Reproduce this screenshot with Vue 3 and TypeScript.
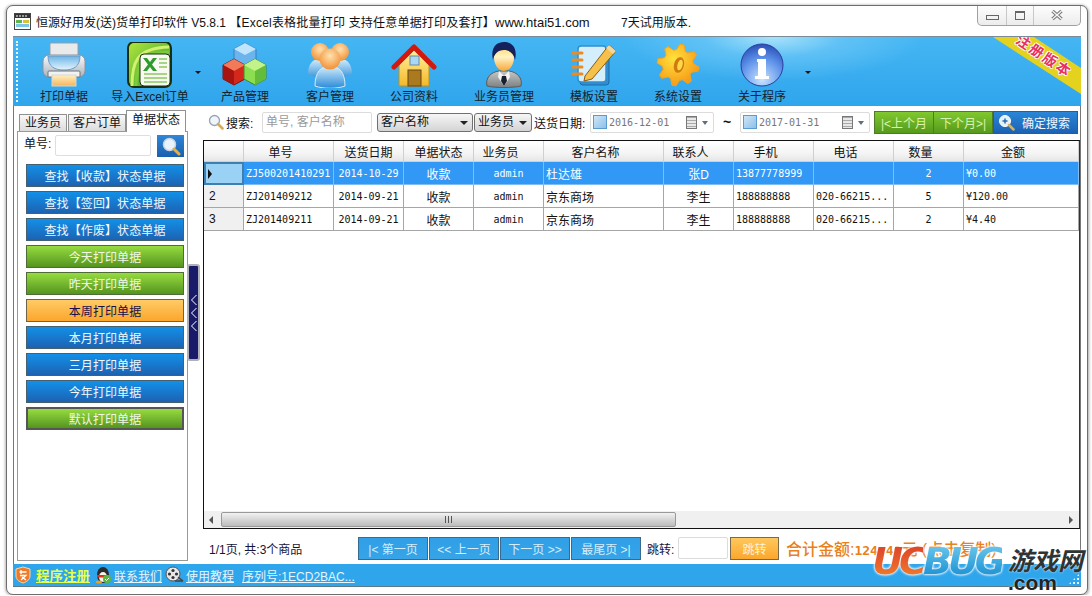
<script setup lang="ts">
// Toolbar entries; width keeps each label centred like the original toolbar
const tools = [
  { icon: "printer", label: "打印单据", width: 76 },
  { icon: "excel", label: "导入Excel订单", width: 96, more: true },
  { icon: "cubes", label: "产品管理", width: 94 },
  { icon: "people", label: "客户管理", width: 76 },
  { icon: "house", label: "公司资料", width: 92 },
  { icon: "agent", label: "业务员管理", width: 88 },
  { icon: "notebook", label: "模板设置", width: 92 },
  { icon: "gear", label: "系统设置", width: 76 },
  { icon: "info", label: "关于程序", width: 92, more: true },
];

const filters = [
  { label: "查找【收款】状态单据", tone: "blue" },
  { label: "查找【签回】状态单据", tone: "blue" },
  { label: "查找【作废】状态单据", tone: "blue" },
  { label: "今天打印单据", tone: "green" },
  { label: "昨天打印单据", tone: "green" },
  { label: "本周打印单据", tone: "orange" },
  { label: "本月打印单据", tone: "blue" },
  { label: "三月打印单据", tone: "blue" },
  { label: "今年打印单据", tone: "blue" },
  { label: "默认打印单据", tone: "green strong" },
];

const columns = ["", "单号", "送货日期", "单据状态", "业务员", "客户名称", "联系人", "手机", "电话", "数量", "金额"];
// These headers sit centred; the others lean left of their column
const centredHeads = [0, 2, 3];

const rows = [
  { no: "", id: "ZJ500201410291", date: "2014-10-29", state: "收款", user: "admin", customer: "杜达雄", contact: "张D", phone: "13877778999", tel: "", qty: "2", amount: "¥0.00" },
  { no: "2", id: "ZJ201409212", date: "2014-09-21", state: "收款", user: "admin", customer: "京东商场", contact: "李生", phone: "188888888", tel: "020-66215...", qty: "5", amount: "¥120.00" },
  { no: "3", id: "ZJ201409211", date: "2014-09-21", state: "收款", user: "admin", customer: "京东商场", contact: "李生", phone: "188888888", tel: "020-66215...", qty: "2", amount: "¥4.40" },
];

const pages = ["|< 第一页", "<< 上一页", "下一页 >>", "最尾页 >|"];

// Gear outline for the settings icon
const gearPoints = Array.from({ length: 32 }, (_, i) => {
  const tooth = i % 4 < 2 ? 21 : 15.5;
  const a = ((i + 0.5) / 32) * Math.PI * 2;
  return `${(23 + tooth * Math.cos(a)).toFixed(1)},${(23 + tooth * Math.sin(a)).toFixed(1)}`;
}).join(" ");
</script>

<template>
  <div class="window">
    <header class="titlebar">
      <svg class="app-icon" width="17" height="17" viewBox="0 0 17 17">
        <rect x="0.5" y="0.5" width="16" height="16" fill="#fff" stroke="#444" />
        <rect x="1" y="1" width="15" height="4" fill="#333" />
        <path d="M3 2v2M6 2v2M9 2v2M12 2v2" stroke="#fff" />
        <rect x="2" y="7" width="6" height="3" fill="#5fb548" />
        <rect x="9" y="7" width="6" height="3" fill="#d8c23a" />
        <rect x="2" y="11" width="13" height="3" fill="#7dc6e8" />
      </svg>
      <span class="title-text">恒源好用发(送)货单打印软件 V5.8.1 <span class="title-slogan">【Excel表格批量打印 支持任意单据打印及套打】</span><span class="title-url">www.htai51.com</span></span>
      <span class="trial">7天试用版本.</span>
      <div class="win-controls">
        <span class="ctl ctl-min"><i></i></span>
        <span class="ctl ctl-max"><i></i></span>
        <span class="ctl ctl-close">
          <svg width="14" height="12" viewBox="0 0 14 12">
            <path d="M2.500 2l9 8M11.500 2l-9 8" stroke="#777" stroke-width="3.400" fill="none" />
            <path d="M2.500 2l9 8M11.500 2l-9 8" stroke="#f4f4f4" stroke-width="1.400" fill="none" />
          </svg>
        </span>
      </div>
    </header>

    <nav class="toolbar">
      <div class="dots"></div>
      <div v-for="tool in tools" :key="tool.label" class="tool" :style="{ width: tool.width + 'px' }">
        <svg class="tool-icon" width="46" height="46" viewBox="0 0 46 46">
          <defs>
            <linearGradient id="gBody" x1="0" y1="0" x2="0" y2="1"><stop offset="0" stop-color="#fafbfc" /><stop offset="1" stop-color="#aab2bb" /></linearGradient>
            <linearGradient id="gBowl" x1="0" y1="0" x2="0" y2="1"><stop offset="0" stop-color="#6db4e8" /><stop offset="1" stop-color="#e6f5fd" /></linearGradient>
            <linearGradient id="gPaper" x1="0" y1="0" x2="0" y2="1"><stop offset="0" stop-color="#fff0c4" /><stop offset="1" stop-color="#f6b45a" /></linearGradient>
            <linearGradient id="gExcel" x1="0" y1="0" x2="1" y2="1"><stop offset="0" stop-color="#b4e63c" /><stop offset="1" stop-color="#1f9a2e" /></linearGradient>
            <linearGradient id="gWall" x1="0" y1="0" x2="0" y2="1"><stop offset="0" stop-color="#fff2a0" /><stop offset="1" stop-color="#f4b828" /></linearGradient>
            <linearGradient id="gShirt" x1="0" y1="0" x2="0" y2="1"><stop offset="0" stop-color="#d4eefc" /><stop offset="1" stop-color="#2a8ad8" /></linearGradient>
            <linearGradient id="gSuit" x1="0" y1="0" x2="0" y2="1"><stop offset="0" stop-color="#c4c8c8" /><stop offset="1" stop-color="#7c8082" /></linearGradient>
            <radialGradient id="gHead" cx="0.5" cy="0.35" r="0.7"><stop offset="0" stop-color="#ffe2b0" /><stop offset="1" stop-color="#f08a2c" /></radialGradient>
            <linearGradient id="gFace" x1="0" y1="0" x2="0" y2="1"><stop offset="0" stop-color="#ffd04a" /><stop offset="0.5" stop-color="#fff2c4" /><stop offset="1" stop-color="#f9a838" /></linearGradient>
            <radialGradient id="gGear" cx="0.4" cy="0.35" r="0.8"><stop offset="0" stop-color="#ffe23c" /><stop offset="1" stop-color="#f58a10" /></radialGradient>
            <radialGradient id="gInfo" cx="0.5" cy="0.85" r="0.95"><stop offset="0" stop-color="#c8e4ff" /><stop offset="0.55" stop-color="#5b8fe8" /><stop offset="1" stop-color="#1b3da8" /></radialGradient>
          </defs>

          <g v-if="tool.icon === 'printer'">
            <rect x="9" y="1" width="28" height="14" rx="1" fill="#e8eaec" stroke="#9a9ea4" />
            <rect x="2" y="13" width="42" height="22" rx="6" fill="url(#gBody)" stroke="#8a929c" />
            <path d="M7 14h32c0 11-7 14-16 14S7 25 7 14z" fill="url(#gBowl)" stroke="#6c9cc4" />
            <rect x="7" y="29" width="32" height="6" rx="1" fill="#f0f2f4" stroke="#6c747c" />
            <rect x="11" y="33" width="24" height="11" fill="url(#gPaper)" stroke="#d8d8cc" />
          </g>

          <g v-else-if="tool.icon === 'excel'">
            <rect x="1" y="0" width="43" height="45" rx="6" fill="url(#gExcel)" stroke="#18300f" stroke-width="2" />
            <path d="M5 44C5 22 8 6 42 5" fill="none" stroke="#d4f070" stroke-width="3" />
            <path d="M9 44C9 26 12 12 42 10" fill="none" stroke="#7ecb3a" stroke-width="3" />
            <rect x="13" y="12" width="30" height="32" rx="4" fill="#f8faf2" stroke="#18300f" />
            <path d="M16 16h4l3 4 3-4h4l-5 6.500 5 6.500h-4l-3-4-3 4h-4l5-6.500z" fill="#2f9a2f" />
            <path d="M32 17h8M32 21h8M32 25h8M17 32h23M17 36h23M17 40h23" stroke="#a8d48a" stroke-width="2" />
          </g>

          <g v-else-if="tool.icon === 'cubes'">
            <path d="M23 1l11 6v13l-11 6-11-6V7z" fill="#6cb4ee" stroke="#3a7fc0" />
            <path d="M23 1l11 6-11 6-11-6z" fill="#c0e4fb" />
            <path d="M12 17l11 6v14l-11 6-11-6V23z" fill="#d5281c" stroke="#7a1410" />
            <path d="M12 17l11 6-11 6-11-6z" fill="#f27a58" />
            <path d="M1 23l11 6v14l-11-6z" fill="#a8140f" />
            <path d="M33 17l11 6v14l-11 6-11-6V23z" fill="#8ade50" stroke="#3f8a28" />
            <path d="M33 17l11 6-11 6-11-6z" fill="#c4f28a" />
            <path d="M44 23l-11 6v14l11-6z" fill="#63bd3a" />
          </g>

          <g v-else-if="tool.icon === 'people'">
            <path d="M1 32c0-10 5-15 11-15s10 5 10 13l-6 8z" fill="url(#gShirt)" />
            <path d="M45 32c0-10-5-15-11-15s-10 5-10 13l6 8z" fill="url(#gShirt)" />
            <circle cx="13" cy="10" r="9" fill="url(#gHead)" />
            <circle cx="33" cy="10" r="9" fill="url(#gHead)" />
            <path d="M8 44c0-14 6-20 15-20s15 6 15 20c-8 3-22 3-30 0z" fill="url(#gShirt)" stroke="#d4ecfa" />
            <circle cx="23" cy="17" r="10.500" fill="url(#gHead)" />
          </g>

          <g v-else-if="tool.icon === 'house'">
            <path d="M8 23L23 8l15 15v21H8z" fill="url(#gWall)" stroke="#c0901c" />
            <path d="M3 25L23 5l20 20" fill="none" stroke="#d3190f" stroke-width="5" stroke-linejoin="round" stroke-linecap="round" />
            <rect x="19" y="14" width="9" height="9" fill="#a8d8f4" stroke="#6a8aa4" />
            <rect x="17" y="28" width="13" height="16" fill="#ab7a1e" stroke="#6a4410" />
          </g>

          <g v-else-if="tool.icon === 'agent'">
            <path d="M6 44c-2-8 4-14 12-15h10c8 1 14 7 12 15-8 2-26 2-34 0z" fill="url(#gSuit)" stroke="#5a5c58" />
            <path d="M18 29l5 5 5-5 1 6-6 9-6-9z" fill="#f4f4f0" />
            <path d="M21 34h4l1 5-3 5-3-5z" fill="#1b2030" />
            <ellipse cx="23" cy="15" rx="10" ry="14" fill="url(#gFace)" />
            <path d="M12 18C9 5 16 0 23 0s14 5 11 18c-1-6-5-10-11-10s-10 4-11 10z" fill="#16205c" />
          </g>

          <g v-else-if="tool.icon === 'notebook'">
            <rect x="9" y="6" width="29" height="37" rx="3" fill="#2f8fd0" stroke="#1d6aa8" />
            <rect x="7" y="4" width="28" height="36" rx="3" fill="#d4eefb" stroke="#2f8fd0" stroke-width="1.500" />
            <path d="M2 11h9M2 18h9M2 25h9M2 32h9" stroke="#f08a1e" stroke-width="3" stroke-linecap="round" />
            <path d="M14 34L38 3l7 6-24 28-8 2z" fill="#f6c14a" stroke="#8a5a14" />
            <path d="M38 3l7 6-3 3-7-6z" fill="#f0d8a0" />
          </g>

          <g v-else-if="tool.icon === 'gear'">
            <polygon :points="gearPoints" fill="url(#gGear)" stroke="#f4a418" stroke-linejoin="round" />
            <ellipse cx="24" cy="23" rx="5" ry="8" fill="#d17a10" transform="rotate(15 24 23)" />
            <ellipse cx="25" cy="23" rx="2.500" ry="5.500" fill="#ffd84a" transform="rotate(15 25 23)" />
          </g>

          <g v-else>
            <circle cx="23" cy="23" r="21" fill="url(#gInfo)" stroke="#2a3f9c" />
            <circle cx="23" cy="10" r="4" fill="#fff" />
            <path d="M18 17h9v17h3v3H16v-3h3V20h-1z" fill="#fff" />
          </g>
        </svg>
        <span class="tool-label">{{ tool.label }}</span>
        <i v-if="tool.more" class="more"></i>
      </div>

      <div class="ribbon"></div>
      <span class="ribbon-text">注册版本</span>
    </nav>

    <main class="main">
      <aside class="side">
        <div class="tabs">
          <span class="tab">业务员</span>
          <span class="tab">客户订单</span>
          <span class="tab active">单据状态</span>
        </div>
        <div class="panel">
          <div class="lookup">
            <label>单号:</label>
            <input class="lookup-input" type="text" />
            <button class="lookup-btn">
              <svg width="20" height="20" viewBox="0 0 20 20">
                <circle cx="8.500" cy="8.500" r="6" fill="#e8f3fb" stroke="#c4d4e0" stroke-width="1.500" />
                <path d="M13 13l5 5" stroke="#e0b04a" stroke-width="3" stroke-linecap="round" />
              </svg>
            </button>
          </div>
          <div class="filters">
            <button v-for="f in filters" :key="f.label" class="filter" :class="f.tone">{{ f.label }}</button>
          </div>
        </div>
      </aside>

      <div class="handle-col">
        <div class="handle">
          <svg width="6" height="38" viewBox="0 0 6 38">
            <path d="M5.500 1L.5 6l5 5M5.500 14L.5 19l5 5M5.500 27L.5 32l5 5" stroke="#fff" fill="none" />
          </svg>
        </div>
      </div>

      <section class="content">
        <div class="searchbar">
          <svg class="search-icon" width="16" height="16" viewBox="0 0 16 16">
            <circle cx="6.500" cy="6.500" r="5" fill="#eef6fc" stroke="#9aa4ae" stroke-width="1.300" />
            <path d="M10 10l4.500 4.500" stroke="#d9a94a" stroke-width="2.500" stroke-linecap="round" />
          </svg>
          <span class="search-label">搜索:</span>
          <input class="search-input" type="text" placeholder="单号, 客户名称" />
          <div class="select select-a">客户名称<i></i></div>
          <div class="select select-b">业务员<i></i></div>
          <span class="date-label">送货日期:</span>
          <div class="date">
            <b class="check"></b><span class="date-text">2016-12-01</span>
            <span class="cal"></span><i></i>
          </div>
          <span class="tilde">~</span>
          <div class="date">
            <b class="check"></b><span class="date-text">2017-01-31</span>
            <span class="cal"></span><i></i>
          </div>
          <div class="range">
            <button class="month">|&lt;上个月</button>
            <button class="month">下个月&gt;|</button>
            <button class="confirm">
              <svg width="17" height="17" viewBox="0 0 17 17">
                <circle cx="7" cy="7" r="5.500" fill="#e4f0f8" stroke="#fff" />
                <path d="M4.500 7h5M7 4.500v5" stroke="#2a6aa8" stroke-width="1.500" />
                <path d="M11 11l4.500 4.500" stroke="#e0b04a" stroke-width="2.500" stroke-linecap="round" />
              </svg>
              确定搜索
            </button>
          </div>
        </div>

        <div class="grid">
          <div class="row head">
            <span v-for="(c, i) in columns" :key="i" class="cell" :class="{ lean: !centredHeads.includes(i) }">{{ c }}</span>
          </div>
          <div v-for="(r, i) in rows" :key="r.id" class="row body" :class="{ selected: i === 0 }">
            <span class="cell indicator">
              <i v-if="i === 0" class="pointer"></i>{{ r.no }}
            </span>
            <span class="cell left mono">{{ r.id }}</span>
            <span class="cell mono">{{ r.date }}</span>
            <span class="cell">{{ r.state }}</span>
            <span class="cell mono">{{ r.user }}</span>
            <span class="cell left">{{ r.customer }}</span>
            <span class="cell">{{ r.contact }}</span>
            <span class="cell left mono">{{ r.phone }}</span>
            <span class="cell left mono">{{ r.tel }}</span>
            <span class="cell mono">{{ r.qty }}</span>
            <span class="cell left mono">{{ r.amount }}</span>
          </div>

          <div class="scrollbar">
            <i class="arrow-left"></i>
            <div class="thumb"><span class="grip"></span></div>
            <i class="arrow-right"></i>
          </div>
        </div>

        <div class="pager">
          <span class="pager-info">1/1页, 共:3个商品</span>
          <div class="pages">
            <button v-for="p in pages" :key="p" class="page-btn">{{ p }}</button>
          </div>
          <span class="jump-label">跳转:</span>
          <input class="jump-input" type="text" />
          <button class="jump-btn">跳转</button>
          <span class="total">合计金额:<span class="total-num">124.40</span>元 (点击复制)</span>
        </div>
      </section>
    </main>

    <footer class="statusbar">
      <svg width="16" height="18" viewBox="0 0 16 18">
        <path d="M1 3l7-2 7 2v7c0 4-4 6-7 7-3-1-7-3-7-7z" fill="#f07a28" stroke="#f8d8a8" />
        <path d="M4.500 6h7M6 4v4M5 9.500h6L6 14M7 11l4 3" stroke="#fff" stroke-width="1.300" fill="none" />
      </svg>
      <a class="link reg">程序注册</a>
      <svg width="18" height="18" viewBox="0 0 18 18">
        <ellipse cx="9" cy="9" rx="6" ry="8" fill="#2b2b2b" />
        <ellipse cx="9" cy="11" rx="4" ry="5" fill="#f8f4e8" />
        <path d="M3 9h12v2.500H3z" fill="#e03020" />
        <ellipse cx="5" cy="16" rx="3" ry="1.500" fill="#f0a020" />
        <circle cx="13" cy="13" r="4" fill="#5cb83a" />
        <path d="M11 13l1.500 1.500L15 12" stroke="#fff" fill="none" />
      </svg>
      <a class="link">联系我们</a>
      <svg width="19" height="18" viewBox="0 0 19 18">
        <circle cx="8" cy="8" r="7" fill="#e8e8e8" stroke="#555" />
        <circle cx="8" cy="4.500" r="1.600" fill="#333" /><circle cx="8" cy="11.500" r="1.600" fill="#333" />
        <circle cx="4.500" cy="8" r="1.600" fill="#333" /><circle cx="11.500" cy="8" r="1.600" fill="#333" />
        <path d="M10 15h8M13 11l5 4" stroke="#444" stroke-width="1.500" />
      </svg>
      <a class="link">使用教程</a>
      <a class="link serial">序列号:1ECD2BAC...</a>
      <i class="size-grip"></i>
    </footer>

    <!-- site stamp sitting over the lower right corner -->
    <div class="stamp">
      <span class="stamp-logo"><em class="uc">UC</em><em class="bug">BUG</em></span>
      <div class="stamp-side">
        <span class="stamp-cn">游戏网</span>
        <span class="stamp-com">.com</span>
      </div>
    </div>
  </div>
</template>

<style scoped>
.window {
  position: relative;
  box-sizing: border-box;
  width: 1082px;
  height: 590px;
  margin: 5px 0 0 6px;
  padding: 0 6px 7px;
  border: 1px solid #6e6e6e;
  border-radius: 7px;
  background: #fff;
  box-shadow: -1px 0 3px #bbb, 1px 1px 3px #aaa;
  display: flex;
  flex-direction: column;
  font: 12px "Liberation Sans", "Noto Sans CJK SC", sans-serif;
  color: #111;
  overflow: hidden;
}

button {
  font: inherit;
  padding: 0;
  cursor: default;
}

input {
  box-sizing: border-box;
  font: inherit;
  outline: none;
}

/* title bar */
.titlebar {
  height: 30px;
  display: flex;
  align-items: center;
  flex: none;
}
.app-icon {
  margin: 0 5px 0 1px;
}
.title-text {
  width: 555px;
  white-space: nowrap;
}
.title-slogan {
  letter-spacing: 0.2px;
}
.title-url {
  font-size: 13px;
}
.trial {
  margin-left: 30px;
}
.win-controls {
  margin-left: auto;
  margin-top: -11px;
  display: flex;
  height: 19px;
  border: 1px solid #a0a0a0;
  border-top: none;
  border-radius: 0 0 5px 5px;
  background: linear-gradient(#fdfdfd, #ececec);
}
.ctl {
  display: flex;
  align-items: center;
  justify-content: center;
  border-left: 1px solid #c8c8c8;
}
.ctl:first-child {
  border-left: none;
}
.ctl-min { width: 28px; }
.ctl-max { width: 26px; }
.ctl-close { width: 46px; }
.ctl-min i {
  width: 11px;
  height: 3px;
  margin-top: 5px;
  border: 1px solid #666;
}
.ctl-max i {
  width: 8px;
  height: 7px;
  border: 1px solid #666;
  box-shadow: inset 0 1px 0 #666;
}

/* toolbar */
.toolbar {
  position: relative;
  flex: none;
  height: 70px;
  box-sizing: border-box;
  padding-left: 13px;
  display: flex;
  align-items: flex-start;
  overflow: hidden;
  border-top: 1px solid #7a8a96;
  background:
    radial-gradient(ellipse 150px 44px at 760px 0, #a8e2fb 0%, rgba(120, 205, 248, 0.55) 45%, rgba(58, 170, 240, 0) 100%),
    linear-gradient(#45b6f3, #2fa5ec);
}
.dots {
  position: absolute;
  left: 3px;
  top: 4px;
  bottom: 4px;
  width: 2px;
  border-left: 2px dotted #e6f4fc;
}
.tool {
  position: relative;
  flex: none;
  display: flex;
  flex-direction: column;
  align-items: center;
}
.tool-icon {
  margin-top: 5px;
}
.tool-label {
  margin-top: 1px;
  white-space: nowrap;
  line-height: 16px;
  color: #14222c;
}
.more {
  position: absolute;
  right: -3px;
  top: 34px;
  border: 3px solid transparent;
  border-top: 3px solid #111;
  border-bottom: none;
}
.ribbon {
  position: absolute;
  right: 0;
  top: 0;
  width: 88px;
  height: 58px;
  background: #e4d21e;
  clip-path: polygon(0 0, 41px 0, 88px 31px, 88px 57px);
}
.ribbon-text {
  position: absolute;
  left: 1031px;
  top: 19px;
  transform: translate(-50%, -50%) rotate(34deg);
  font-size: 14px;
  line-height: 16px;
  font-weight: 700;
  letter-spacing: 2px;
  white-space: nowrap;
  color: #e8305e;
  text-shadow: 1px 0 0 #fff, -1px 0 0 #fff, 0 1px 0 #fff, 0 -1px 0 #fff;
}

/* main area */
.main {
  flex: 1;
  min-height: 0;
  display: flex;
  padding-left: 3px;
  border-left: 1px solid #777;
  border-right: 1px solid #777;
  box-sizing: border-box;
}
.side {
  flex: none;
  width: 171px;
  display: flex;
  flex-direction: column;
  padding: 4px 0 3px;
  box-sizing: border-box;
}
.tabs {
  display: flex;
  align-items: flex-end;
  height: 21px;
  padding-left: 2px;
  flex: none;
}
.tab {
  box-sizing: border-box;
  height: 17px;
  line-height: 16px;
  text-align: center;
  border: 1px solid #909090;
  border-bottom: none;
  background: linear-gradient(#f8f8f8, #dcdcdc);
  width: 48px;
}
.tab + .tab {
  width: 58px;
  margin-left: 1px;
}
.tab.active {
  position: relative;
  height: 22px;
  width: 60px;
  margin: 0 0 -1px 0;
  line-height: 18px;
  background: #fff;
  z-index: 1;
}
.panel {
  flex: 1;
  box-sizing: border-box;
  border: 1px solid #999;
  padding: 3px 3px 0 8px;
}
.lookup {
  display: flex;
  align-items: flex-start;
  margin-left: -2px;
}
.lookup label {
  width: 31px;
  line-height: 18px;
}
.lookup-input {
  width: 96px;
  height: 21px;
  border: 1px solid #dedede;
  border-radius: 2px;
}
.lookup-btn {
  width: 27px;
  height: 22px;
  margin-left: 6px;
  border: none;
  background: linear-gradient(#2f86d8, #1a5fae);
  display: flex;
  align-items: center;
  justify-content: center;
}
.filters {
  margin-top: 7px;
  display: flex;
  flex-direction: column;
  gap: 4px;
}
.filter {
  box-sizing: border-box;
  height: 23px;
  border: 1px solid #45606e;
  font-size: 12px;
  letter-spacing: 0.1px;
  color: #f2f8fc;
}
.filter.blue {
  background: linear-gradient(#1290e8, #1d62b2);
}
.filter.green {
  border-color: #4e6b38;
  background: linear-gradient(#96dc40, #54941f);
  color: #f0f8e4;
}
.filter.orange {
  border-color: #6e6248;
  background: linear-gradient(#ffcb66, #fba62c);
  color: #16104a;
}
.filter.strong {
  border: 2px solid #565656;
}

.handle-col {
  flex: none;
  width: 12px;
  padding-top: 158px;
}
.handle {
  box-sizing: border-box;
  width: 13px;
  height: 97px;
  margin-left: -1px;
  border: 2px solid #b0b0b8;
  border-radius: 3px;
  background: #1a1a6a;
  display: flex;
  align-items: center;
  justify-content: center;
}
.content {
  flex: 1;
  min-width: 0;
  margin-left: 3px;
  display: flex;
  flex-direction: column;
}

/* search row */
.searchbar {
  flex: none;
  height: 34px;
  display: flex;
  align-items: center;
  padding-bottom: 2px;
  box-sizing: border-box;
}
.search-icon {
  margin-left: 5px;
}
.search-label {
  margin-left: 2px;
  width: 36px;
  white-space: nowrap;
}
.search-input {
  width: 110px;
  height: 21px;
  padding: 0 3px;
  border: 1px solid #dcdcdc;
  border-radius: 2px;
  color: #999;
}
.search-input::placeholder {
  color: #9a9a9a;
}
.select {
  position: relative;
  box-sizing: border-box;
  height: 19px;
  line-height: 17px;
  padding-left: 3px;
  border: 1px solid #707070;
  border-radius: 3px;
  background: linear-gradient(#f6f6f6, #d4d4d4);
}
.select i {
  position: absolute;
  right: 4px;
  top: 7px;
  border: 4px solid transparent;
  border-top: 4px solid #222;
  border-bottom: none;
}
.select-a {
  width: 96px;
  margin-left: 5px;
}
.select-b {
  width: 58px;
  margin-left: 1px;
}
.date-label {
  width: 56px;
  margin-left: 2px;
  white-space: nowrap;
}
.date {
  position: relative;
  box-sizing: border-box;
  width: 124px;
  height: 21px;
  display: flex;
  align-items: center;
  padding-left: 2px;
  border: 1px solid #dcdcdc;
  border-radius: 2px;
  background: #fff;
}
.tilde + .date {
  width: 130px;
}
.check {
  width: 12px;
  height: 12px;
  border: 1px solid #5b9bd0;
  background: linear-gradient(135deg, #cfe6f8, #8cc0e8);
}
.date-text {
  margin-left: 2px;
  font: 10px "DejaVu Sans Mono", "Liberation Mono", monospace;
  color: #777;
}
.cal {
  margin-left: auto;
  margin-right: 16px;
  width: 9px;
  height: 11px;
  border: 1px solid #777;
  background: repeating-linear-gradient(#aaa 0 1px, #e8e8e8 1px 3px);
}
.date i {
  position: absolute;
  right: 5px;
  top: 8px;
  border: 3.500px solid transparent;
  border-top: 4px solid #5f6f7f;
  border-bottom: none;
}
.tilde {
  width: 26px;
  text-align: center;
  font-weight: 700;
  font-size: 14px;
}
.range {
  display: flex;
  height: 23px;
  margin-left: 4px;
}
.month {
  box-sizing: border-box;
  width: 60px;
  border: 1px solid #4f7a2a;
  background: linear-gradient(#80c830, #569a1c);
  color: #d8f4b0;
  white-space: nowrap;
}
.month + .month {
  margin-left: -1px;
}
.confirm {
  box-sizing: border-box;
  width: 85px;
  border: 1px solid #235f9e;
  background: linear-gradient(#2a86d6, #1c62b4);
  color: #f0f8ff;
  display: flex;
  align-items: center;
  gap: 7px;
  padding-left: 4px;
  white-space: nowrap;
}

/* order grid */
.grid {
  flex: none;
  height: 389px;
  box-sizing: border-box;
  display: flex;
  flex-direction: column;
  border: 1px solid #111;
  border-right-color: #333;
  background: #fff;
}
.row {
  flex: none;
  display: grid;
  grid-template-columns: 40px 90px 70px 70px 70px 120px 70px 80px 80px 70px 1fr;
}
.cell {
  box-sizing: border-box;
  display: flex;
  align-items: center;
  justify-content: center;
  white-space: nowrap;
  overflow: hidden;
  border-right: 1px solid #a6a6a6;
  border-bottom: 1px solid #a6a6a6;
}
.cell.left {
  justify-content: flex-start;
  padding-left: 2px;
}
.cell.lean {
  padding-right: 16px;
}
.mono {
  font: 10px "DejaVu Sans Mono", "Liberation Mono", monospace;
}
.head {
  height: 21px;
  background: linear-gradient(#fff, #f4f4f4 60%, #e4e4e4);
}
.head .cell {
  border-color: #d0d0d0;
}
.body {
  height: 23px;
}
.indicator {
  justify-content: flex-start;
  padding-left: 5px;
  background: #f0f0f0;
}
.selected .cell {
  background: #3298f6;
  color: #fff;
  border-color: #80bdf2;
}
.selected .indicator {
  background: #9ad2f6;
  border: 2px solid #3c7fb0;
  padding-left: 2px;
}
.pointer {
  width: 0;
  height: 0;
  border: 5px solid transparent;
  border-left: 4px solid #111;
  border-right: none;
}
.scrollbar {
  margin-top: auto;
  height: 17px;
  flex: none;
  display: flex;
  align-items: center;
  background: #f0f0f0;
  position: relative;
}
.thumb {
  box-sizing: border-box;
  width: 455px;
  height: 15px;
  margin-left: 8px;
  border: 1px solid #999;
  border-radius: 2px;
  background: linear-gradient(#f2f2f2, #d6d6d6 50%, #bcbcbc);
  display: flex;
  align-items: center;
  justify-content: center;
}
.grip {
  width: 7px;
  height: 7px;
  background: repeating-linear-gradient(90deg, #555 0 1px, transparent 1px 3px);
}
.arrow-left,
.arrow-right {
  width: 0;
  height: 0;
  border: 4px solid transparent;
}
.arrow-left {
  margin-left: 5px;
  border-right: 4px solid #555;
  border-left: none;
}
.arrow-right {
  margin-left: auto;
  margin-right: 6px;
  border-left: 4px solid #555;
  border-right: none;
}

/* pager */
.pager {
  flex: 1;
  display: flex;
  align-items: center;
  padding-top: 3px;
  box-sizing: border-box;
}
.pager-info {
  width: 149px;
  padding-left: 6px;
  color: #14143c;
  white-space: nowrap;
}
.pages {
  display: flex;
  gap: 1px;
}
.page-btn {
  box-sizing: border-box;
  width: 70px;
  height: 23px;
  border: 1px solid #3a6a8e;
  background: linear-gradient(#2f9fe6, #38a4e8);
  color: #d4eefc;
  white-space: nowrap;
}
.jump-label {
  width: 31px;
  margin-left: 6px;
  color: #14143c;
  white-space: nowrap;
}
.jump-input {
  width: 50px;
  height: 22px;
  border: 1px solid #dcdcdc;
  border-radius: 2px;
}
.jump-btn {
  box-sizing: border-box;
  width: 49px;
  height: 23px;
  margin-left: 2px;
  border: 1px solid #7a6a4a;
  background: linear-gradient(#ffc75c, #fba72e);
  color: #fff3d8;
}
.total {
  margin-left: 7px;
  font-size: 16px;
  font-weight: 500;
  color: #e8801e;
  white-space: nowrap;
}
.total-num {
  font: 700 13px "DejaVu Sans Mono", "Liberation Mono", monospace;
}

/* status bar */
.statusbar {
  position: relative;
  flex: none;
  height: 23px;
  display: flex;
  align-items: center;
  padding-left: 2px;
  background: #2fa6ec;
  border-bottom: 1px solid #5a7a8a;
  box-sizing: border-box;
}
.link {
  color: #e6f5fe;
  text-decoration: underline;
  white-space: nowrap;
  margin-left: 2px;
}
.reg {
  margin-left: 5px;
  font-size: 13.500px;
  color: #eaff4a;
  font-weight: 700;
  margin-right: 1px;
}
.link + svg {
  margin-left: 3px;
}
.serial {
  margin-left: 8px;
}
.size-grip {
  position: absolute;
  right: 1px;
  bottom: 1px;
  width: 12px;
  height: 12px;
  background: radial-gradient(circle, #e4f4fe 1px, transparent 1.2px) 0 0 / 4px 4px;
  clip-path: polygon(100% 0, 100% 100%, 0 100%);
}

/* watermark */
.stamp {
  position: absolute;
  right: 4px;
  bottom: 2px;
  display: flex;
  align-items: flex-start;
  gap: 6px;
  pointer-events: none;
}
.stamp-logo {
  display: block;
  font: italic 700 38px/30px "DejaVu Sans", sans-serif;
  letter-spacing: -4px;
  white-space: nowrap;
  filter: drop-shadow(0 0 1px #fff) drop-shadow(0 0 1px #fff);
}
.stamp-logo em {
  -webkit-background-clip: text;
  background-clip: text;
  color: transparent;
}
.uc {
  background-image: linear-gradient(#d83a2a, #e8602c 55%, #f08a2a);
}
.bug {
  background-image: linear-gradient(#7cd0f0, #2a9cd8 70%, #2a86c4);
}
.stamp-side {
  display: flex;
  flex-direction: column;
  align-items: flex-start;
}
.stamp-cn {
  font: italic 700 25px/27px "Noto Sans CJK SC", sans-serif;
  color: #2e3436;
  text-shadow: 0 0 2px #fff;
  white-space: nowrap;
}
.stamp-com {
  font: 700 21px/19px "Liberation Sans", sans-serif;
  color: #222;
  text-shadow: 0 0 2px #fff;
}
</style>

<style>
html,
body {
  margin: 0;
  background: #fff;
  overflow: hidden;
}
</style>
